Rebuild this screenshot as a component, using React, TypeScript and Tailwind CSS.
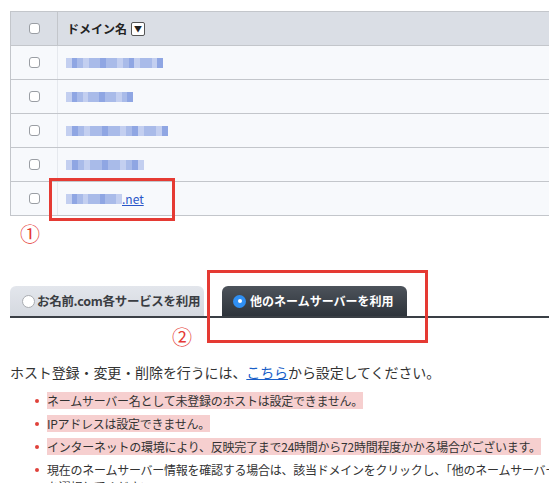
import React from 'react';

const font = { fontFamily: '"Noto Sans CJK JP", "Noto Sans", sans-serif' };

// pixelated blur blocks standing in for masked domain names
const Blur = ({ w }: { w: number }) => (
  <span className="inline-flex h-[10px] align-middle" style={{ width: w }}>
    {Array.from({ length: Math.ceil(w / 6) }).map((_, i) => (
      <span
        key={i}
        className={`h-full w-[6px] ${i % 5 === 1 ? 'bg-[#8fa6e3]' : i % 3 === 0 ? 'bg-[#c3cff0]' : 'bg-[#a9bbe9]'}`}
      />
    ))}
  </span>
);

const Checkbox = () => (
  <span className="block w-[11px] h-[11px] rounded-[3px] border border-[#9a9ea4] bg-white" />
);

const rows = [97, 67, 102, 78, 0];

const notes = [
  { text: 'ネームサーバー名として未登録のホストは設定できません。', hl: true },
  { text: 'IPアドレスは設定できません。', hl: true },
  { text: 'インターネットの環境により、反映完了まで24時間から72時間程度かかる場合がございます。', hl: true },
  { text: '現在のネームサーバー情報を確認する場合は、該当ドメインをクリックし、「他のネームサーバーを利用」タブを選択してください。', hl: false },
];

export default function App() {
  return (
    <div className="relative w-[549px] h-[483px] overflow-hidden bg-white text-[#333]" style={font}>
      {/* table */}
      <div className="pt-[11px] pl-[10px]">
        <div className="w-[580px] border-t border-l border-[#c3c6cb]">
          <div className="flex h-[34px] bg-[#dadee5] border-b border-[#c3c6cb]">
            <div className="w-[47px] flex items-center justify-center border-r border-[#c3c6cb]">
              <Checkbox />
            </div>
            <div className="flex items-center pl-[9px] gap-[4px]">
              <span className="text-[12px] font-bold text-[#222]">ドメイン名</span>
              <span className="w-[14px] h-[14px] border border-[#555] rounded-[2px] bg-white flex items-center justify-center text-[8px] leading-none text-[#222]">▼</span>
            </div>
          </div>
          {rows.map((w, i) => (
            <div key={i} className="flex h-[34px] bg-[#f7f9fc] border-b border-[#c3c6cb]">
              <div className="w-[47px] flex items-center justify-center border-r border-[#e6e9ee]">
                <Checkbox />
              </div>
              <div className="flex items-center pl-[8px]">
                {w > 0 ? (
                  <Blur w={w} />
                ) : (
                  <span className="flex items-center text-[12px] text-[#2a55c8] underline">
                    <Blur w={56} />
                    .net
                  </span>
                )}
              </div>
            </div>
          ))}
        </div>
      </div>

      <div className="pl-[20px] pt-[6px] h-[40px] text-[20px] leading-[24px] text-[#e53935]">①</div>

      {/* tabs */}
      <div className="pl-[10px] pt-[30px]">
        <div className="flex gap-[18px] w-[560px] border-b-[2px] border-[#3a3f45]">
          <div className="w-[194px] h-[30px] rounded-t-[6px] bg-gradient-to-b from-[#e3e6ec] to-[#d5d9e0] flex items-center pl-[12px] gap-[2px] whitespace-nowrap">
            <span className="w-[13px] h-[13px] rounded-full border border-[#a9acb1] bg-white shrink-0" />
            <span className="text-[12.5px] font-bold tracking-[-0.3px] text-[#3a3d42]">お名前.com各サービスを利用</span>
          </div>
          <div className="w-[185px] h-[30px] rounded-t-[6px] bg-gradient-to-b from-[#4d535b] to-[#2e343b] flex items-center pl-[11px] gap-[4px] whitespace-nowrap">
            <span className="w-[13px] h-[13px] rounded-full bg-[#2f8ff3] flex items-center justify-center shrink-0">
              <span className="w-[4px] h-[4px] rounded-full bg-white" />
            </span>
            <span className="text-[12px] font-bold text-white">他のネームサーバーを利用</span>
          </div>
        </div>
      </div>

      <div className="pl-[172px] pt-[7px] h-[44px] text-[20px] leading-[24px] text-[#e53935]">②</div>

      {/* description */}
      <div className="pl-[10px] w-[640px]">
        <p className="text-[14px] leading-[20px] tracking-[-0.1px] text-[#333]">
          ホスト登録・変更・削除を行うには、<span className="text-[#1a5fc8] underline">こちら</span>から設定してください。
        </p>
        <ul className="mt-[10px] pl-[25px] w-[620px]">
          {notes.map((n, i) => (
            <li key={i} className="flex items-start gap-[8px] mb-[6px]">
              <span className="mt-[7px] w-[4px] h-[4px] rounded-full bg-[#e0413a] shrink-0" />
              <span className={`text-[12px] leading-[17px] tracking-[-0.25px] ${n.hl ? 'bg-[#f6cfcf]' : ''}`}>{n.text}</span>
            </li>
          ))}
        </ul>
      </div>

      {/* annotation boxes */}
      <div className="absolute left-[49px] top-[178px] w-[126px] h-[43px] border-[3px] border-[#e53a33]" />
      <div className="absolute left-[207px] top-[270px] w-[221px] h-[73px] border-[3px] border-[#e53a33]" />
    </div>
  );
}
